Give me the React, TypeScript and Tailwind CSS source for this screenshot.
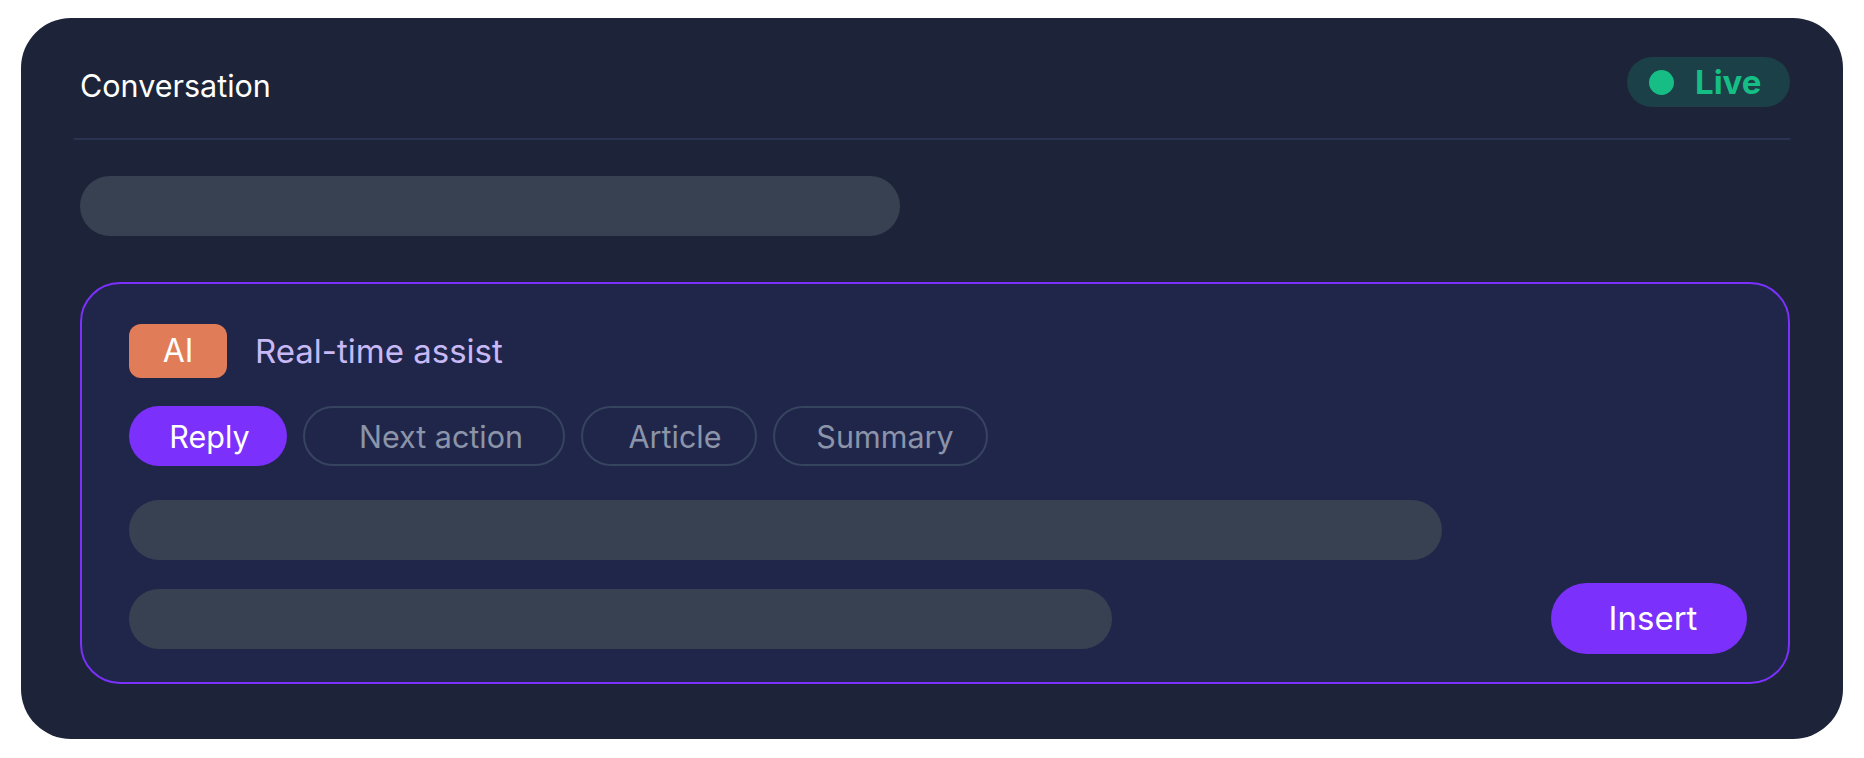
import { useState } from 'react'

const modes = [
  { id: 'reply', label: 'Reply', size: 'w-[158px] pl-[3px]' },
  { id: 'next', label: 'Next action', size: 'w-[262px] pl-[14px]' },
  { id: 'article', label: 'Article', size: 'w-[176px] pl-[12px]' },
  { id: 'summary', label: 'Summary', size: 'w-[215px] pl-[9px]' },
]

function LiveBadge() {
  return (
    <div className="flex h-[50px] w-[163px] items-center rounded-full bg-[#1b4047] pl-[22px]">
      <span className="h-[25px] w-[25px] rounded-full bg-[#16bd84]" />
      <span className="ml-[21px] text-[33px] font-bold leading-none text-[#16bd84]">Live</span>
    </div>
  )
}

function AssistPanel() {
  const [mode, setMode] = useState('reply')

  return (
    <div className="h-[402px] rounded-[40px] border-2 border-[#7b30fb] bg-[#20264a] pb-[28px] pl-[47px] pr-[41px] pt-[40px]">
      <div className="flex h-[54px] items-center">
        <div className="flex h-[54px] w-[98px] items-center justify-center rounded-[12px] bg-[#e07c57] text-[32px] leading-none text-white">
          AI
        </div>
        <span className="ml-[28px] text-[33px] leading-none text-[#c7b9f6]">Real-time assist</span>
      </div>

      <div className="mt-[28px] flex h-[60px] gap-[16px]">
        {modes.map((m) => (
          <button
            key={m.id}
            onClick={() => setMode(m.id)}
            className={`flex h-[60px] items-center justify-center rounded-full pt-[2px] text-[30.5px] leading-none ${m.size} ${
              mode === m.id
                ? 'bg-[#7b30fb] text-white'
                : 'border-2 border-[#36445f] text-[#8b94a9]'
            }`}
          >
            {m.label}
          </button>
        ))}
      </div>

      <div className="mt-[34px] h-[60px] w-[1313px] rounded-full bg-[#374151]" />

      <div className="mt-[23px] flex h-[71px] items-center justify-between">
        <div className="h-[60px] w-[983px] rounded-full bg-[#374151]" />
        <button className="flex h-[71px] w-[196px] items-center justify-center rounded-full bg-[#7b30fb] pl-[8px] text-[33px] leading-none text-white">
          Insert
        </button>
      </div>
    </div>
  )
}

export default function App() {
  return (
    <div className="min-h-screen bg-white pl-[21px] pr-[21px] pt-[18px] font-['Inter','Liberation_Sans',sans-serif]">
      <div className="h-[721px] rounded-[50px] bg-[#1d2439] pb-[54px] pl-[53px] pr-[53px] pt-[39px]">
        {/* header */}
        <div className="flex items-start justify-between pl-[6px]">
          <h1 className="mt-[13px] text-[30.5px] leading-[31px] font-normal text-white">Conversation</h1>
          <LiveBadge />
        </div>
        <div className="mt-[31px] h-[2px] bg-[#2a3450]" />

        <div className="pl-[6px]">
          <div className="mt-[36px] h-[60px] w-[820px] rounded-full bg-[#374151]" />
          <div className="mt-[46px]">
            <AssistPanel />
          </div>
        </div>
      </div>
    </div>
  )
}
